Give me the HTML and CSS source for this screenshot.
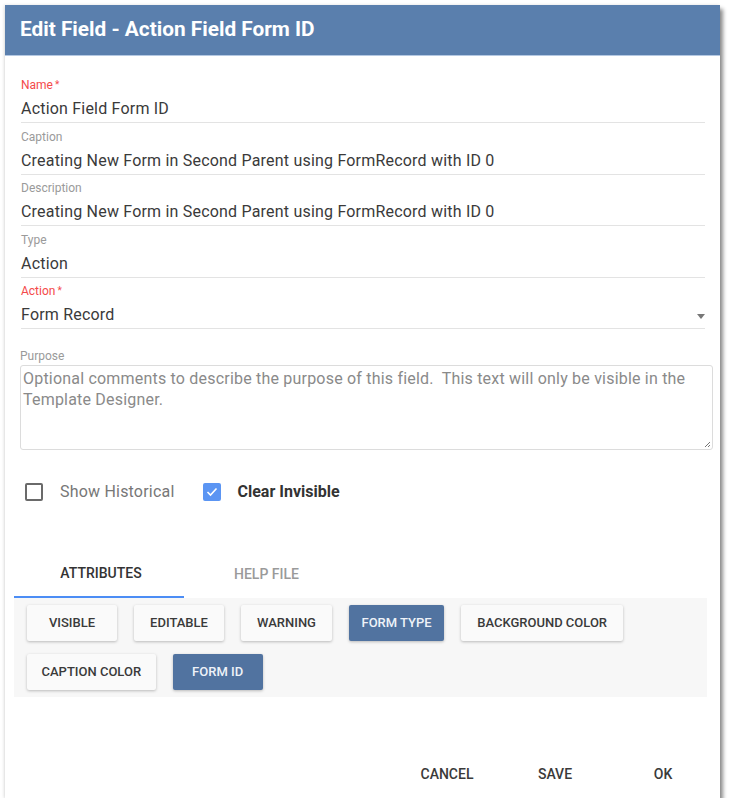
FILE: index.html
```html
<!DOCTYPE html>
<html>
<head>
<meta charset="utf-8">
<link rel="stylesheet" href="styles.css">
</head>
<body>
<div class="dialog">
  <div class="header">Edit Field - Action Field Form ID</div>
  <div class="body">
    <div class="field">
      <div class="label required">Name<span class="star">*</span></div>
      <div class="value">Action Field Form ID</div>
    </div>
    <div class="field">
      <div class="label">Caption</div>
      <div class="value">Creating New Form in Second Parent using FormRecord with ID 0</div>
    </div>
    <div class="field">
      <div class="label">Description</div>
      <div class="value">Creating New Form in Second Parent using FormRecord with ID 0</div>
    </div>
    <div class="field">
      <div class="label">Type</div>
      <div class="value">Action</div>
    </div>
    <div class="field select">
      <div class="label required">Action<span class="star">*</span></div>
      <div class="value">Form Record<span class="caret"></span></div>
    </div>
    <div class="purpose">
      <div class="label">Purpose</div>
      <div class="textarea">Optional comments to describe the purpose of this field.&nbsp; This text will only be visible in the Template Designer.
        <svg class="grip" width="8" height="8" viewBox="0 0 8 8"><path d="M7 2 L2 7 M7 5 L5 7" stroke="#777" stroke-width="1"/></svg>
      </div>
    </div>
    <div class="checks">
      <label class="check"><span class="box"></span><span class="ctext">Show Historical</span></label>
      <label class="check on"><span class="box"><svg width="12" height="10" viewBox="0 0 12 10"><path d="M1.5 5 L4.5 8 L10.5 1.5" fill="none" stroke="#fff" stroke-width="1.6"/></svg></span><span class="ctext">Clear Invisible</span></label>
    </div>
    <div class="tabs">
      <div class="tab active">ATTRIBUTES</div>
      <div class="tab">HELP FILE</div>
    </div>
    <div class="panel">
      <div class="attr">VISIBLE</div>
      <div class="attr">EDITABLE</div>
      <div class="attr">WARNING</div>
      <div class="attr sel wide">FORM TYPE</div>
      <div class="attr">BACKGROUND COLOR</div>
      <div class="attr narrow">CAPTION COLOR</div>
      <div class="attr sel">FORM ID</div>
    </div>
  </div>
  <div class="footer">
    <div class="fbtn">CANCEL</div>
    <div class="fbtn">SAVE</div>
    <div class="fbtn">OK</div>
  </div>
</div>
</body>
</html>
```
FILE: styles.css
```css
html, body {
  margin: 0;
  padding: 0;
  background: #ffffff;
}
body {
  font-family: Roboto, "Liberation Sans", sans-serif;
  color: #333;
}
.dialog {
  margin: 5px 0 0 5px;
  width: 715px;
  height: 793px;
  background: #fff;
  display: flex;
  flex-direction: column;
  box-shadow: 3px 4px 4px rgba(0,0,0,0.45), -1px 0 3px rgba(0,0,0,0.12);
}
.header {
  height: 50px;
  background: #5a7fad;
  border-bottom: 1px solid #b4c8e2;
  color: #fff;
  font-size: 20.8px;
  font-weight: 700;
  line-height: 49px;
  padding-left: 15px;
}
.body {
  flex: 1;
  padding: 16px 15px 0 16px;
  display: flex;
  flex-direction: column;
}
.field {
  padding-top: 6px;
  padding-bottom: 1px;
  border-bottom: 1px solid #e3e3e3;
  margin-bottom: 0.5px;
}
.label {
  font-size: 12px;
  line-height: 14px;
  color: #9a9a9a;
}
.label.required {
  color: #f44a4a;
}
.star {
  margin-left: 2px;
  font-size: 10px;
  vertical-align: top;
}
.value {
  margin-top: 5px;
  font-size: 16px;
  letter-spacing: 0.2px;
  line-height: 24px;
  color: #3a3a3a;
  position: relative;
}
.caret {
  position: absolute;
  right: 0;
  top: 11px;
  width: 0;
  height: 0;
  border-left: 4px solid transparent;
  border-right: 4px solid transparent;
  border-top: 5px solid #777;
}
.purpose {
  margin-top: 19px;
}
.purpose .label {
  margin-left: -1px;
}
.textarea {
  position: relative;
  margin: 2px -8px 0 -1px;
  height: 79px;
  border: 1px solid #dcdcdc;
  border-radius: 3px;
  padding: 2px;
  font-size: 16px;
  letter-spacing: 0.2px;
  line-height: 21px;
  color: #8a8a8a;
}
.grip {
  position: absolute;
  right: 1px;
  bottom: 1px;
}
.checks {
  display: flex;
  align-items: center;
  margin-top: 32px;
  height: 20px;
  padding-left: 4px;
}
.check {
  display: flex;
  align-items: center;
}
.box {
  width: 14px;
  height: 14px;
  border: 2px solid #6a6a6a;
  border-radius: 2px;
  display: flex;
  align-items: center;
  justify-content: center;
}
.check.on .box {
  background: #5b95f3;
  border-color: #5b95f3;
}
.ctext {
  margin-left: 17px;
  font-size: 16px;
  letter-spacing: 0.2px;
  color: #777;
}
.check.on {
  margin-left: 29px;
}
.check.on .ctext {
  color: #333;
  font-weight: 700;
  letter-spacing: 0;
  margin-left: 16px;
}
.tabs {
  display: flex;
  margin: 48px 0 0 -7px;
  height: 48px;
}
.tab {
  width: 170px;
  text-align: center;
  font-size: 14px;
  font-weight: 500;
  line-height: 48px;
  color: #9a9a9a;
  box-sizing: border-box;
}
.tab.active {
  color: #333;
  border-bottom: 2px solid #4c8df5;
  line-height: 46px;
  padding-left: 4px;
}
.tab + .tab {
  width: 165px;
}
.panel {
  margin: 0 -2px 0 -7px;
  background: #f7f7f7;
  padding: 7px 13px 7px 13px;
  display: flex;
  flex-wrap: wrap;
  column-gap: 17px;
  row-gap: 13px;
}
.attr {
  height: 36px;
  line-height: 36px;
  padding: 0 16px;
  min-width: 58px;
  text-align: center;
  background: #fafafa;
  font-size: 13px;
  font-weight: 500;
  color: #3a3a3a;
  border-radius: 2px;
  box-shadow: 0 1px 3px rgba(0,0,0,0.25);
}
.attr.sel {
  background: #5173a0;
  color: #eef2f8;
}
.attr.wide {
  padding: 0 12.5px;
}
.attr.narrow {
  padding: 0 14.5px;
}
.footer {
  display: flex;
  justify-content: flex-end;
  gap: 8px;
  padding: 0 7px 6px 0;
}
.fbtn {
  width: 100px;
  height: 36px;
  line-height: 36px;
  text-align: center;
  font-size: 14px;
  font-weight: 500;
  color: #3a3a3a;
}
```
